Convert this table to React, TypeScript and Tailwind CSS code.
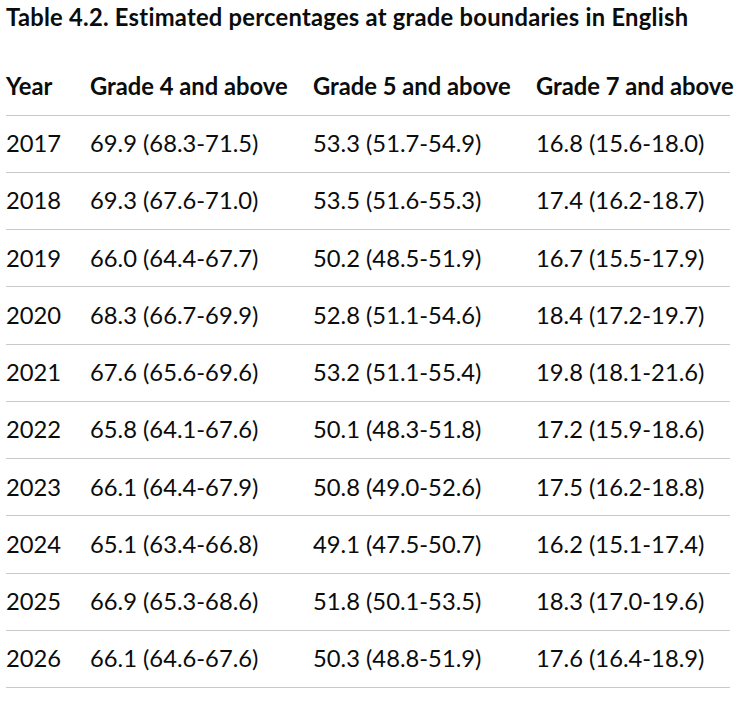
const rows: [string, string, string, string][] = [
  ["2017", "69.9 (68.3-71.5)", "53.3 (51.7-54.9)", "16.8 (15.6-18.0)"],
  ["2018", "69.3 (67.6-71.0)", "53.5 (51.6-55.3)", "17.4 (16.2-18.7)"],
  ["2019", "66.0 (64.4-67.7)", "50.2 (48.5-51.9)", "16.7 (15.5-17.9)"],
  ["2020", "68.3 (66.7-69.9)", "52.8 (51.1-54.6)", "18.4 (17.2-19.7)"],
  ["2021", "67.6 (65.6-69.6)", "53.2 (51.1-55.4)", "19.8 (18.1-21.6)"],
  ["2022", "65.8 (64.1-67.6)", "50.1 (48.3-51.8)", "17.2 (15.9-18.6)"],
  ["2023", "66.1 (64.4-67.9)", "50.8 (49.0-52.6)", "17.5 (16.2-18.8)"],
  ["2024", "65.1 (63.4-66.8)", "49.1 (47.5-50.7)", "16.2 (15.1-17.4)"],
  ["2025", "66.9 (65.3-68.6)", "51.8 (50.1-53.5)", "18.3 (17.0-19.6)"],
  ["2026", "66.1 (64.6-67.6)", "50.3 (48.8-51.9)", "17.6 (16.4-18.9)"],
];

const headers = ["Year", "Grade 4 and above", "Grade 5 and above", "Grade 7 and above"];

export default function App() {
  return (
    <div
      className="bg-white text-[#0b0c0c] pl-[6px] w-[750px] h-[701px] overflow-hidden"
      style={{ fontFamily: "Lato, 'Liberation Sans', sans-serif" }}
    >
      <table className="table-fixed border-collapse w-[724px]">
        <caption className="text-left font-bold text-[23.75px] leading-[31.25px] tracking-[0.25px] pt-[2px] pb-[25px] whitespace-nowrap">
          Table 4.2. Estimated percentages at grade boundaries in English
        </caption>
        <colgroup>
          <col className="w-[84px]" />
          <col className="w-[223px]" />
          <col className="w-[223px]" />
          <col className="w-[194px]" />
        </colgroup>
        <thead>
          <tr className="border-b border-[#c9c9c9]">
            {headers.map((h) => (
              <th
                key={h}
                className="text-left font-bold text-[23.75px] leading-[31.25px] py-[12.5px] pr-[25px] last:pr-0 whitespace-nowrap"
              >
                {h}
              </th>
            ))}
          </tr>
        </thead>
        <tbody>
          {rows.map((r) => (
            <tr key={r[0]} className="border-b border-[#c9c9c9]">
              {r.map((c, i) => (
                <td
                  key={i}
                  className="text-left text-[23.75px] leading-[31.25px] py-[12.5px] pr-[25px] last:pr-0 whitespace-nowrap"
                >
                  {c}
                </td>
              ))}
            </tr>
          ))}
        </tbody>
      </table>
    </div>
  );
}
